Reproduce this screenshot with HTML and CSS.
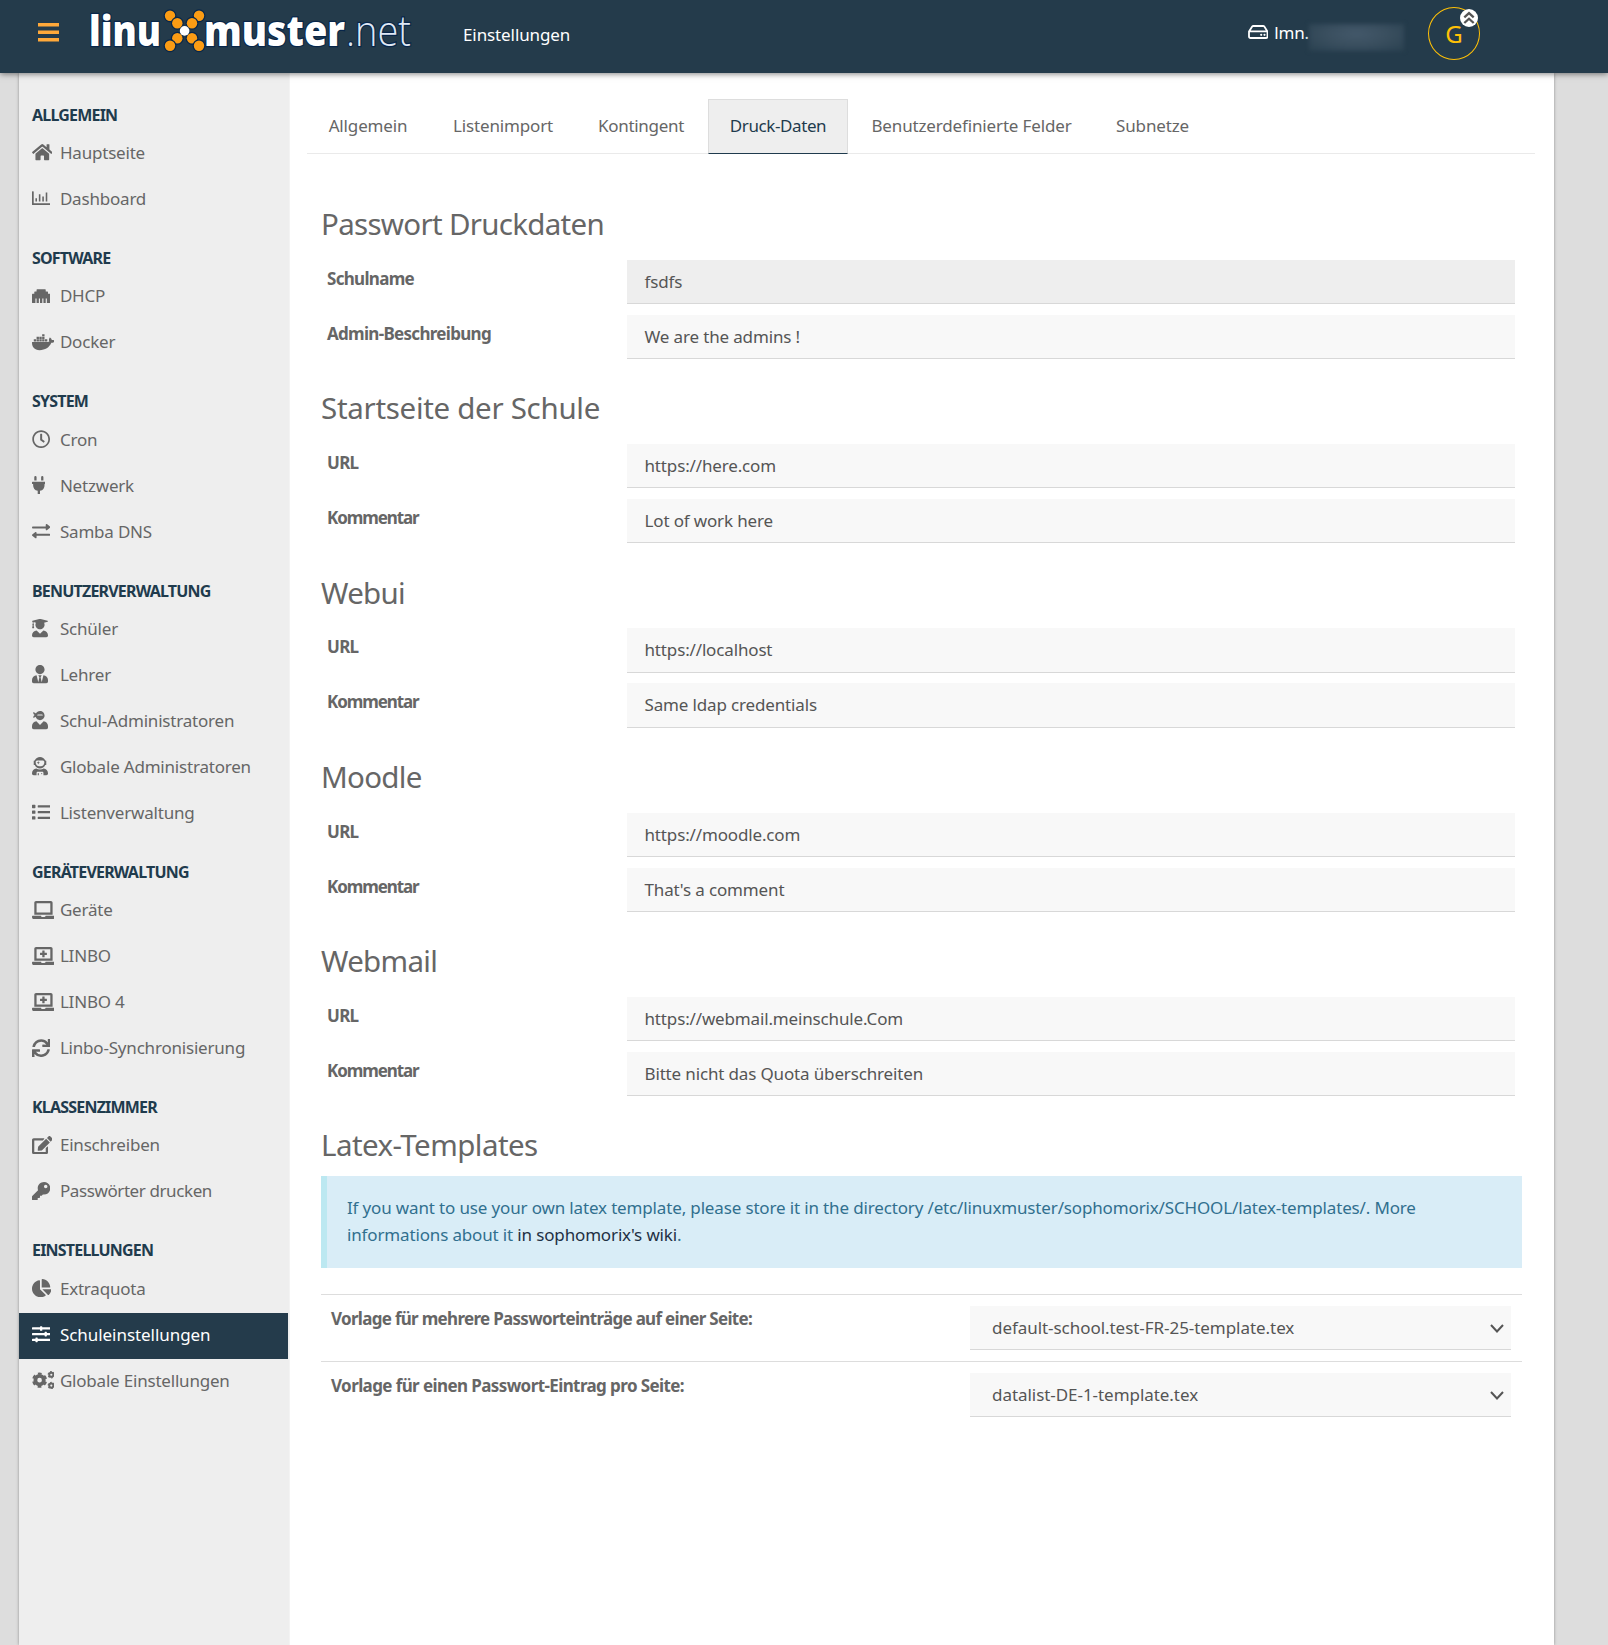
FILE: index.html
```html
<!DOCTYPE html>
<html lang="de">
<head>
<meta charset="utf-8">
<title>Einstellungen</title>
<link rel="stylesheet" href="styles.css">
</head>
<body>
<header class="topbar">
  <svg class="burger" viewBox="0 0 21 19"><path d="M0 0h21v3.5H0zM0 7.5h21v3.5H0zM0 15h21v3.5H0z"/></svg>
  <svg class="logo" viewBox="0 0 330 60" role="img" aria-label="linuxmuster.net">
    <g class="logo-text">
      <text class="logo-bold" x="5" y="45.5" textLength="72" lengthAdjust="spacingAndGlyphs">linu</text>
      <text class="logo-bold" x="120" y="45.5" textLength="141" lengthAdjust="spacingAndGlyphs">muster</text>
      <text class="logo-thin" x="262" y="45.5" textLength="65" lengthAdjust="spacingAndGlyphs">.net</text>
    </g>
    <g class="logo-dots">
      <circle cx="86" cy="15.7" r="5.2"/><circle cx="115" cy="15.7" r="5.2"/>
      <circle cx="93.3" cy="23.3" r="5.2"/><circle cx="108" cy="23.3" r="5.2"/>
      <circle cx="93.3" cy="38.3" r="5.2"/><circle cx="108" cy="38.3" r="5.2"/>
      <circle cx="86" cy="45.8" r="5.2"/><circle cx="115" cy="45.8" r="5.2"/>
      <circle class="logo-center" cx="100.6" cy="30.9" r="4.8"/>
    </g>
  </svg>
  <span class="page-name">Einstellungen</span>
  <div class="host">
    <svg class="hdd" viewBox="0 0 20.5 14"><path d="M1 6.6 4.2 1.6Q4.6 1 5.4 1h9.7q.8 0 1.2.6l3.2 5V11.4q0 1.6-1.6 1.6H2.6Q1 13 1 11.4zM1.4 6.4h17.8"/><circle cx="13.2" cy="9.8" r="1.1"/><circle cx="16.5" cy="9.8" r="1.1"/></svg>
    <span>lmn.</span><span class="redacted"></span>
  </div>
  <div class="avatar">G
    <svg class="avatar-badge" viewBox="0 0 18 18"><circle cx="9" cy="9" r="9"/><path d="M4.3 8.4 9 4.1l4.7 4.3M4.3 14 9 9.7l4.7 4.3"/></svg>
  </div>
</header>
<div class="shell">
  <nav class="sidebar">
    <h3>ALLGEMEIN</h3>
    <a><svg viewBox="0 0 576 512"><path d="M280.37 148.26L96 300.11V464a16 16 0 0 0 16 16l112.06-.29a16 16 0 0 0 15.92-16V368a16 16 0 0 1 16-16h64a16 16 0 0 1 16 16v95.64a16 16 0 0 0 16 16.05L464 480a16 16 0 0 0 16-16V300L295.67 148.26a12.19 12.19 0 0 0-15.3 0zM571.6 251.47L488 182.56V44.05a12 12 0 0 0-12-12h-56a12 12 0 0 0-12 12v72.61L318.47 43a48 48 0 0 0-61 0L4.34 251.47a12 12 0 0 0-1.6 16.9l25.5 31A12 12 0 0 0 45.15 301l235.22-193.74a12.19 12.19 0 0 1 15.3 0L530.9 301a12 12 0 0 0 16.9-1.6l25.5-31a12 12 0 0 0-1.7-16.93z"/></svg><span>Hauptseite</span></a>
    <a><svg viewBox="0 0 512 512"><path d="M0 76q0-12 12-12h24q12 0 12 12v324h452q12 0 12 12v24q0 12-12 12H16q-16 0-16-16zM96 260h44v92H96zM192 148h44v204h-44zM288 212h44v140h-44zM384 100h44v252h-44z"/></svg><span>Dashboard</span></a>
    <h3>SOFTWARE</h3>
    <a><svg viewBox="0 0 512 512"><path d="M496 192h-48v-48c0-8.8-7.2-16-16-16h-48V80c0-8.8-7.2-16-16-16H144c-8.8 0-16 7.2-16 16v48H80c-8.8 0-16 7.2-16 16v48H16c-8.8 0-16 7.2-16 16v224c0 8.8 7.2 16 16 16h80V320h32v128h64V320h32v128h64V320h32v128h64V320h32v128h80c8.8 0 16-7.2 16-16V208c0-8.8-7.2-16-16-16z"/></svg><span>DHCP</span></a>
    <a><svg viewBox="0 0 640 512"><path d="M349.9 236.3h-66.1v-59.4h66.1v59.4zm0-204.3h-66.1v60.7h66.1V32zm78.2 144.8H362v59.4h66.1v-59.4zm-156.3-72.1h-66.1v60.1h66.1v-60.1zm78.1 0h-66.1v60.1h66.1v-60.1zm276.8 100c-14.4-9.7-47.6-13.2-73.1-8.4-3.3-24-16.7-44.9-41.1-63.7l-14-9.3-9.3 14c-18.4 27.8-23.4 73.6-3.7 103.8-8.7 4.7-25.8 11.1-48.4 10.7H2.4c-8.7 50.8 5.8 116.8 44 162.1 37.1 43.9 92.7 66.2 165.4 66.2 157.4 0 273.9-72.5 328.4-204.2 21.4.4 67.6.1 91.3-45.2 1.5-2.5 6.6-13.2 8.5-17.1l-13.3-8.9zm-511.1-27.9h-66v59.4h66.1v-59.4zm78.1 0h-66.1v59.4h66.1v-59.4zm78.1 0h-66.1v59.4h66.1v-59.4zm-78.1-72.1h-66.1v60.1h66.1v-60.1z"/></svg><span>Docker</span></a>
    <h3>SYSTEM</h3>
    <a><svg viewBox="0 0 512 512"><path d="M256 8C119 8 8 119 8 256s111 248 248 248 248-111 248-248S393 8 256 8zm0 448c-110.5 0-200-89.5-200-200S145.5 56 256 56s200 89.5 200 200-89.5 200-200 200zm61.8-104.4l-84.9-61.7c-3.1-2.3-4.9-5.9-4.9-9.7V116c0-6.6 5.4-12 12-12h32c6.6 0 12 5.4 12 12v141.7l66.8 48.6c5.4 3.9 6.5 11.4 2.6 16.8L334.6 349c-3.9 5.3-11.4 6.5-16.8 2.6z"/></svg><span>Cron</span></a>
    <a><svg viewBox="0 0 384 512"><path d="M320,32a32,32,0,0,0-64,0v96h64Zm48,128H16A16,16,0,0,0,0,176v32a16,16,0,0,0,16,16H32v32A160.07,160.07,0,0,0,160,412.8V512h64V412.8A160.07,160.07,0,0,0,352,256V224h16a16,16,0,0,0,16-16V176A16,16,0,0,0,368,160ZM128,32a32,32,0,0,0-64,0v96h64Z"/></svg><span>Netzwerk</span></a>
    <a><svg viewBox="0 0 512 512"><path d="M24 128h360V80c0-21.4 25.900-32 41-17l80 64c9 9 9 25 0 34l-80 64c-15 15-41 5-41-17v-24H24q-24 0-24-28t24-28zM488 328H128v-24c0-22-26-32-41-17L7 351c-9 9-9 25 0 34l80 64c15 15 41 5 41-17v-48h360q24 0 24-28t-24-28z"/></svg><span>Samba DNS</span></a>
    <h3>BENUTZERVERWALTUNG</h3>
    <a><svg viewBox="0 0 448 512"><path d="M319.4 320.6L224 416l-95.4-95.4C57.1 323.7 0 382.2 0 454.4v9.6c0 26.5 21.5 48 48 48h352c26.5 0 48-21.5 48-48v-9.6c0-72.2-57.1-130.7-128.6-133.8zM13.6 79.8l6.4 1.5v58.4c-7 4.2-12 11.5-12 20.3 0 8.4 4.6 15.4 11.1 19.7L3.5 242c-1.7 6.9 2.1 14 7.6 14h41.8c5.5 0 9.3-7.1 7.6-14l-15.6-62.3C51.4 175.4 56 168.4 56 160c0-8.8-5-16.1-12-20.3V87.1l66 15.9c-8.6 17.2-14 36.4-14 57 0 70.7 57.3 128 128 128s128-57.3 128-128c0-20.6-5.3-39.8-14-57l96.3-23.2c18.2-4.4 18.2-27.1 0-31.5l-190.4-46c-13-3.1-26.7-3.1-39.7 0L13.6 48.2c-18.1 4.4-18.1 27.2 0 31.6z"/></svg><span>Schüler</span></a>
    <a><svg viewBox="0 0 448 512"><path d="M224 256c70.7 0 128-57.3 128-128S294.7 0 224 0 96 57.3 96 128s57.3 128 128 128zm95.8 32.6L272 480l-32-136 32-56h-96l32 56-32 136-47.8-191.4C56.9 292 0 350.3 0 422.4V464c0 26.5 21.5 48 48 48h352c26.5 0 48-21.5 48-48v-41.6c0-72.1-56.9-130.4-128.2-133.8z"/></svg><span>Lehrer</span></a>
    <a><svg viewBox="0 0 448 512"><path d="M325.4 289.2L224 390.6 122.6 289.2C54 295.3 0 352.2 0 422.4V464c0 26.5 21.5 48 48 48h352c26.5 0 48-21.5 48-48v-41.6c0-70.2-54-127.1-122.6-133.2zM32 192c27.3 0 51.8-11.5 69.2-29.7 15.1 53.9 64 93.7 122.8 93.7 70.7 0 128-57.3 128-128S294.7 0 224 0c-50.4 0-93.6 29.4-114.5 71.8C92.1 47.8 64 32 32 32c0 33.4 17.1 62.8 43.1 80-26 17.2-43.1 46.6-43.1 80zm144-96h96c17.7 0 32 14.3 32 32H144c0-17.7 14.3-32 32-32z"/></svg><span>Schul-Administratoren</span></a>
    <a><svg viewBox="0 0 448 512"><path d="M64 224h13.5c24.7 56.5 80.9 96 146.5 96s121.8-39.5 146.5-96H384c8.8 0 16-7.2 16-16v-96c0-8.8-7.2-16-16-16h-13.5C345.8 39.5 289.6 0 224 0S102.2 39.5 77.5 96H64c-8.8 0-16 7.2-16 16v96c0 8.8 7.2 16 16 16zm40-88c0-22.1 21.5-40 48-40h144c26.5 0 48 17.9 48 40v24c0 53-43 96-96 96h-48c-53 0-96-43-96-96v-24zm72 72l12-36 36-12-36-12-12-36-12 36-36 12 36 12 12 36zm151.6 113.4C297.7 340.7 262.2 352 224 352s-73.7-11.3-103.6-30.6C52.9 328.5 0 385 0 454.4v9.6c0 26.5 21.5 48 48 48h80v-64c0-17.7 14.3-32 32-32h128c17.7 0 32 14.3 32 32v64h80c26.5 0 48-21.5 48-48v-9.6c0-69.4-52.9-125.9-120.4-133zM272 448c-8.8 0-16 7.2-16 16s7.2 16 16 16 16-7.2 16-16-7.2-16-16-16zm-96 0c-8.8 0-16 7.2-16 16v48h32v-48c0-8.8-7.2-16-16-16z"/></svg><span>Globale Administratoren</span></a>
    <a><svg viewBox="0 0 512 512"><path d="M16 48h64q16 0 16 16v64q0 16-16 16H16q-16 0-16-16V64q0-16 16-16zM16 208h64q16 0 16 16v64q0 16-16 16H16q-16 0-16-16v-64q0-16 16-16zM16 368h64q16 0 16 16v64q0 16-16 16H16q-16 0-16-16v-64q0-16 16-16zM176 64h320q16 0 16 16v32q0 16-16 16H176q-16 0-16-16V80q0-16 16-16zM176 224h320q16 0 16 16v32q0 16-16 16H176q-16 0-16-16v-32q0-16 16-16zM176 384h320q16 0 16 16v32q0 16-16 16H176q-16 0-16-16v-32q0-16 16-16z"/></svg><span>Listenverwaltung</span></a>
    <h3>GERÄTEVERWALTUNG</h3>
    <a><svg viewBox="0 0 640 512"><path d="M624 416H381.54c-.74 19.81-14.71 32-32.74 32H288c-18.69 0-33.02-17.47-32.77-32H16c-8.8 0-16 7.2-16 16v16c0 35.2 28.8 64 64 64h512c35.2 0 64-28.8 64-64v-16c0-8.8-7.2-16-16-16zM576 48c0-26.4-21.6-48-48-48H112C85.6 0 64 21.6 64 48v336h512V48zm-64 272H128V64h384v256z"/></svg><span>Geräte</span></a>
    <a><svg viewBox="0 0 640 512"><path d="M232 224h56v56a8 8 0 0 0 8 8h48a8 8 0 0 0 8-8v-56h56a8 8 0 0 0 8-8v-48a8 8 0 0 0-8-8h-56v-56a8 8 0 0 0-8-8h-48a8 8 0 0 0-8 8v56h-56a8 8 0 0 0-8 8v48a8 8 0 0 0 8 8zM624 416H381.54c-.74 19.81-14.71 32-32.74 32H288c-18.69 0-33.02-17.47-32.77-32H16c-8.8 0-16 7.2-16 16v16c0 35.2 28.8 64 64 64h512c35.2 0 64-28.8 64-64v-16c0-8.8-7.2-16-16-16zM576 48c0-26.4-21.6-48-48-48H112C85.6 0 64 21.6 64 48v336h512V48zm-64 272H128V64h384v256z"/></svg><span>LINBO</span></a>
    <a><svg viewBox="0 0 640 512"><path d="M232 224h56v56a8 8 0 0 0 8 8h48a8 8 0 0 0 8-8v-56h56a8 8 0 0 0 8-8v-48a8 8 0 0 0-8-8h-56v-56a8 8 0 0 0-8-8h-48a8 8 0 0 0-8 8v56h-56a8 8 0 0 0-8 8v48a8 8 0 0 0 8 8zM624 416H381.54c-.74 19.81-14.71 32-32.74 32H288c-18.69 0-33.02-17.47-32.77-32H16c-8.8 0-16 7.2-16 16v16c0 35.2 28.8 64 64 64h512c35.2 0 64-28.8 64-64v-16c0-8.8-7.2-16-16-16zM576 48c0-26.4-21.6-48-48-48H112C85.6 0 64 21.6 64 48v336h512V48zm-64 272H128V64h384v256z"/></svg><span>LINBO 4</span></a>
    <a><svg viewBox="0 0 512 512"><path d="M440.65 12.57l4 82.77A247.16 247.16 0 0 0 255.83 8C134.73 8 33.91 94.92 12.29 209.82A12 12 0 0 0 24.09 224h49.05a12 12 0 0 0 11.67-9.26 175.91 175.91 0 0 1 317-56.94l-101.46-4.86a12 12 0 0 0-12.57 12v47.41a12 12 0 0 0 12 12H500a12 12 0 0 0 12-12V12a12 12 0 0 0-12-12h-47.37a12 12 0 0 0-11.98 12.57zM255.83 432a175.61 175.61 0 0 1-146-77.8l101.8 4.87a12 12 0 0 0 12.57-12v-47.4a12 12 0 0 0-12-12H12a12 12 0 0 0-12 12V500a12 12 0 0 0 12 12h47.35a12 12 0 0 0 12-12.6l-4.15-82.57A247.17 247.17 0 0 0 255.83 504c121.11 0 221.93-86.92 243.55-201.82a12 12 0 0 0-11.8-14.18h-49.05a12 12 0 0 0-11.67 9.26A175.86 175.86 0 0 1 255.83 432z"/></svg><span>Linbo-Synchronisierung</span></a>
    <h3>KLASSENZIMMER</h3>
    <a><svg viewBox="0 0 576 512"><path d="M402.6 83.2l90.2 90.2c3.8 3.8 3.8 10 0 13.8L274.4 405.6l-92.8 10.3c-12.4 1.4-22.9-9.1-21.5-21.5l10.3-92.8L388.8 83.2c3.8-3.8 10-3.8 13.8 0zm162-22.9l-48.8-48.8c-15.2-15.2-39.9-15.2-55.2 0l-35.4 35.4c-3.8 3.8-3.8 10 0 13.8l90.2 90.2c3.8 3.8 10 3.8 13.8 0l35.4-35.4c15.2-15.3 15.2-40 0-55.2zM384 346.2V448H64V128h229.8c3.2 0 6.2-1.3 8.5-3.5l40-40c7.6-7.6 2.2-20.5-8.5-20.5H48C21.5 64 0 85.5 0 112v352c0 26.5 21.5 48 48 48h352c26.5 0 48-21.5 48-48V306.2c0-10.7-12.9-16-20.5-8.5l-40 40c-2.2 2.3-3.5 5.3-3.5 8.5z"/></svg><span>Einschreiben</span></a>
    <a class="long"><svg viewBox="0 0 512 512"><path d="M512 176.001C512 273.203 433.202 352 336 352c-11.22 0-22.19-1.062-32.827-3.069l-24.012 27.014A23.999 23.999 0 0 1 261.223 384H224v40c0 13.255-10.745 24-24 24h-40v40c0 13.255-10.745 24-24 24H24c-13.255 0-24-10.745-24-24v-78.059c0-6.365 2.529-12.47 7.029-16.971l161.802-161.802C163.108 213.814 160 195.271 160 176 160 78.798 238.797.001 335.999 0 433.488-.001 512 78.511 512 176.001zM336 128c0 26.51 21.49 48 48 48s48-21.49 48-48-21.49-48-48-48-48 21.49-48 48z"/></svg><span>Passwörter drucken</span></a>
    <h3>EINSTELLUNGEN</h3>
    <a><svg viewBox="0 0 544 512"><path d="M527.79 288H290.5l158.03 158.03c6.04 6.04 15.98 6.53 22.19.68 38.7-36.46 65.32-85.61 73.13-140.86 1.34-9.46-6.51-17.85-16.06-17.85zm-15.83-64.8C503.72 103.74 408.26 8.28 288.8.04 279.68-.59 272 7.1 272 16.24V240h223.77c9.14 0 16.82-7.68 16.19-16.8zM224 288V50.71c0-9.55-8.39-17.4-17.84-16.06C86.99 51.49-4.1 155.6.14 280.37 4.5 408.51 114.83 513.59 243.03 511.98c50.4-.63 96.97-16.87 135.26-44.03 7.9-5.6 8.42-17.23 1.57-24.08L224 288z"/></svg><span>Extraquota</span></a>
    <a class="active"><svg viewBox="0 0 512 512"><path d="M16 64h208V48q0-16 16-16h32q16 0 16 16v16h208q16 0 16 16v32q0 16-16 16H288v16q0 16-16 16h-32q-16 0-16-16v-16H16q-16 0-16-16V80q0-16 16-16zM16 224h336v-16q0-16 16-16h32q16 0 16 16v16h80q16 0 16 16v32q0 16-16 16h-80v16q0 16-16 16h-32q-16 0-16-16v-16H16q-16 0-16-16v-32q0-16 16-16zM16 384h80v-16q0-16 16-16h32q16 0 16 16v16h336q16 0 16 16v32q0 16-16 16H160v16q0 16-16 16h-32q-16 0-16-16v-16H16q-16 0-16-16v-32q0-16 16-16z"/></svg><span>Schuleinstellungen</span></a>
    <a><svg viewBox="0 0 640 512"><g class="gear"><circle cx="212" cy="256" r="118" stroke-width="106"/><circle cx="212" cy="256" r="184" stroke-width="54" stroke-dasharray="104 88.7" stroke-dashoffset="-44"/><circle cx="540" cy="104" r="58" stroke-width="56"/><circle cx="540" cy="104" r="90" stroke-width="28" stroke-dasharray="50 44.2"/><circle cx="540" cy="408" r="58" stroke-width="56"/><circle cx="540" cy="408" r="90" stroke-width="28" stroke-dasharray="50 44.2"/></g></svg><span>Globale Einstellungen</span></a>
  </nav>
  <main class="content">
    <div class="tabs">
      <a class="t1">Allgemein</a><a class="t2">Listenimport</a><a class="t3">Kontingent</a><a class="t4 selected">Druck-Daten</a><a class="t5">Benutzerdefinierte Felder</a><a class="t6">Subnetze</a>
    </div>
    <div class="pane">
      <section><h2>Passwort Druckdaten</h2>
        <div class="field"><label>Schulname</label><div class="input disabled">fsdfs</div></div>
        <div class="field"><label>Admin-Beschreibung</label><div class="input">We are the admins !</div></div></section>
      <section><h2 class="loose">Startseite der Schule</h2>
        <div class="field"><label>URL</label><div class="input">https://here.com</div></div>
        <div class="field"><label class="tight">Kommentar</label><div class="input">Lot of work here</div></div></section>
      <section><h2>Webui</h2>
        <div class="field"><label>URL</label><div class="input">https://localhost</div></div>
        <div class="field"><label class="tight">Kommentar</label><div class="input">Same ldap credentials</div></div></section>
      <section><h2>Moodle</h2>
        <div class="field"><label>URL</label><div class="input">https://moodle.com</div></div>
        <div class="field"><label class="tight">Kommentar</label><div class="input">That's a comment</div></div></section>
      <section><h2>Webmail</h2>
        <div class="field"><label>URL</label><div class="input">https://webmail.meinschule.Com</div></div>
        <div class="field"><label class="tight">Kommentar</label><div class="input">Bitte nicht das Quota überschreiten</div></div></section>
      <section class="latex"><h2>Latex-Templates</h2>
        <p class="alert">If you want to use your own latex template, please store it in the directory /etc/linuxmuster/sophomorix/SCHOOL/latex-templates/. More informations about it <a>in sophomorix's wiki</a>.</p>
        <div class="row"><label>Vorlage für mehrere Passworteinträge auf einer Seite:</label><div class="select"><span>default-school.test-FR-25-template.tex</span><svg viewBox="0 0 14 9"><path d="M1 1l6 6.5L13 1"/></svg></div></div>
        <div class="row"><label class="single">Vorlage für einen Passwort-Eintrag pro Seite:</label><div class="select"><span>datalist-DE-1-template.tex</span><svg viewBox="0 0 14 9"><path d="M1 1l6 6.5L13 1"/></svg></div></div>
      </section>
    </div>
  </main>
</div>
</body>
</html>
```
FILE: styles.css
```css
* { box-sizing: border-box; }
body {
  margin: 0;
  height: 1645px;
  overflow: hidden;
  background: #ddd;
  color: #666;
  font: 17px/27px "Noto Sans", "Open Sans", sans-serif;
  letter-spacing: -0.15px;
}
h2, h3, p { margin: 0; }

.topbar {
  position: relative;
  z-index: 2;
  display: flex;
  height: 73px;
  background: #243b4b;
  color: #fff;
  box-shadow: 0 1px 6px rgba(0, 0, 0, .5);
}
.burger { width: 21px; height: 19px; margin: 23px 0 0 38px; fill: #ffa93a; }
.logo { width: 330px; height: 60px; margin-left: 25px; overflow: visible; }
.logo text { font-family: "Open Sans", "Noto Sans", sans-serif; letter-spacing: 0; fill: #fff; stroke: #08264a; stroke-width: 2.5px; paint-order: stroke; }
.logo-bold { font-size: 42.5px; font-weight: 800; }
.logo .logo-thin { font-size: 42.5px; font-weight: 300; fill: #dfe8f5; }
.logo-dots circle { fill: #fb9c14; stroke: #08264a; stroke-width: 2.5px; paint-order: stroke; }
.logo-dots .logo-center { fill: #fff; stroke: none; }
.page-name { margin: 21px 0 0 49px; letter-spacing: -0.1px; }
.host { display: flex; align-items: flex-start; margin-left: auto; padding-top: 19px; }
.hdd { width: 20.5px; height: 14px; margin: 6px 6px 0 0; fill: none; stroke: #fff; stroke-width: 1.8; }
.hdd circle { fill: #fff; stroke: none; }
.redacted {
  width: 95px;
  height: 27px;
  margin: 5px 24px 0 0;
  background: radial-gradient(ellipse at 50% 38%, #43586a 0, #3a4f5f 45%, #2a4150 100%);
  filter: blur(2px);
}
.avatar {
  position: relative;
  width: 52px;
  height: 53px;
  margin: 7px 128px 0 0;
  border: 1px solid #ffc107;
  border-radius: 50%;
  color: #ffc107;
  font-size: 24px;
  line-height: 51px;
  text-align: center;
}
.avatar-badge { position: absolute; top: 1px; right: 1px; width: 18px; height: 18px; fill: #fff; }
.avatar-badge path { fill: none; stroke: #555; stroke-width: 2.3; }

.shell {
  display: flex;
  width: 1535px;
  height: 1572px;
  margin-left: 19px;
  background: #fff;
  box-shadow: 0 0 3px rgba(0, 0, 0, .35);
}
.sidebar { width: 271px; background: #eee; border-right: 1px solid #f3f3f3; }
.sidebar h3 {
  height: 51.3px;
  padding: 19px 0 0 13px;
  color: #1f3b4d;
  font-size: 16px;
  font-weight: 700;
  line-height: 32px;
  letter-spacing: -0.8px;
}
.sidebar h3:first-child { height: 58px; padding-top: 25.6px; }
.sidebar a { display: flex; align-items: center; height: 46px; padding: 0 0 3px 12.5px; letter-spacing: -0.2px; }
.sidebar svg { flex: none; height: 18.3px; margin-right: -100px; fill: #666; }
.sidebar a span { margin-left: 128.2px; }
.sidebar svg[viewBox="0 0 512 512"] { width: 18.3px; }
.sidebar svg { width: 22.9px; margin-right: -110px; }
.sidebar svg[viewBox="0 0 512 512"] { margin-right: -105.4px; }
.sidebar svg[viewBox="0 0 576 512"] { width: 20.6px; margin-right: -107.7px; }
.sidebar svg[viewBox="0 0 544 512"] { width: 19.4px; margin-right: -106.5px; }
.sidebar svg[viewBox="0 0 448 512"] { width: 16px; margin-right: -103.1px; }
.sidebar svg[viewBox="0 0 384 512"] { width: 13.7px; margin-right: -100.8px; }
.sidebar span { white-space: nowrap; margin-left: 115.5px !important; }
.sidebar .active { width: 269px; background: #243b4b; color: #fff; letter-spacing: -0.05px; }
.sidebar .active svg { fill: #fff; }
.sidebar .long { letter-spacing: -0.4px; }
.gear circle { fill: none; stroke: #666; }

.content { flex: 1; padding: 26px 19px 0 17px; }
.tabs { display: flex; gap: 3px; height: 55px; border-bottom: 1px solid #eaeaea; }
.tabs a { height: 55px; border: 1px solid transparent; line-height: 51px; text-align: center; }
.tabs .selected { border-color: #ddd #ddd #1f3b4d; background: #eee; color: #1f3b4d; }
.t1 { width: 122px; }
.t2 { width: 142px; }
.t3 { width: 128px; letter-spacing: -0.3px; }
.t4 { width: 140px; letter-spacing: -0.4px; }
.t5 { width: 241px; }
.t6 { width: 115px; }

.pane { padding: 49.3px 13px 0 14px; }
section { height: 184.2px; }
h2 { height: 56.7px; padding-top: 1px; font-size: 29.5px; font-weight: 400; line-height: 40px; letter-spacing: -0.7px; }
.loose { letter-spacing: -0.3px; }
label { font-weight: 700; letter-spacing: -0.7px; }
.tight { letter-spacing: -1.1px; }
.single { letter-spacing: -0.6px; }
.field { display: flex; height: 55px; }
.field label { width: 306px; padding: 5px 0 0 6px; }
.input { width: 888px; height: 44.3px; padding: 8px 17.5px; border-bottom: 1px solid #d8d8d8; background: #f8f8f8; color: #555; }
.input.disabled { background: #eee; }

.latex h2 { height: 51.7px; letter-spacing: -0.55px; }
.alert { height: 92px; padding: 18px 18px 0 20px; border-left: 6px solid #bce8f1; background: #d9edf7; color: #31708f; letter-spacing: -0.15px; }
.alert a { color: #1f3044; }
.row { display: flex; justify-content: space-between; height: 67px; padding: 10px 11px 0 10px; border-top: 1px solid #ddd; }
.alert + .row { margin-top: 26px; }
.select { display: flex; justify-content: space-between; width: 541px; height: 44px; margin-top: 1px; padding: 8px 7px 0 22px; border-bottom: 1px solid #d8d8d8; background: #f8f8f8; color: #555; letter-spacing: -0.05px; }
.select svg { width: 14px; height: 9px; margin-top: 10px; fill: none; stroke: #555; stroke-width: 2; }
```
